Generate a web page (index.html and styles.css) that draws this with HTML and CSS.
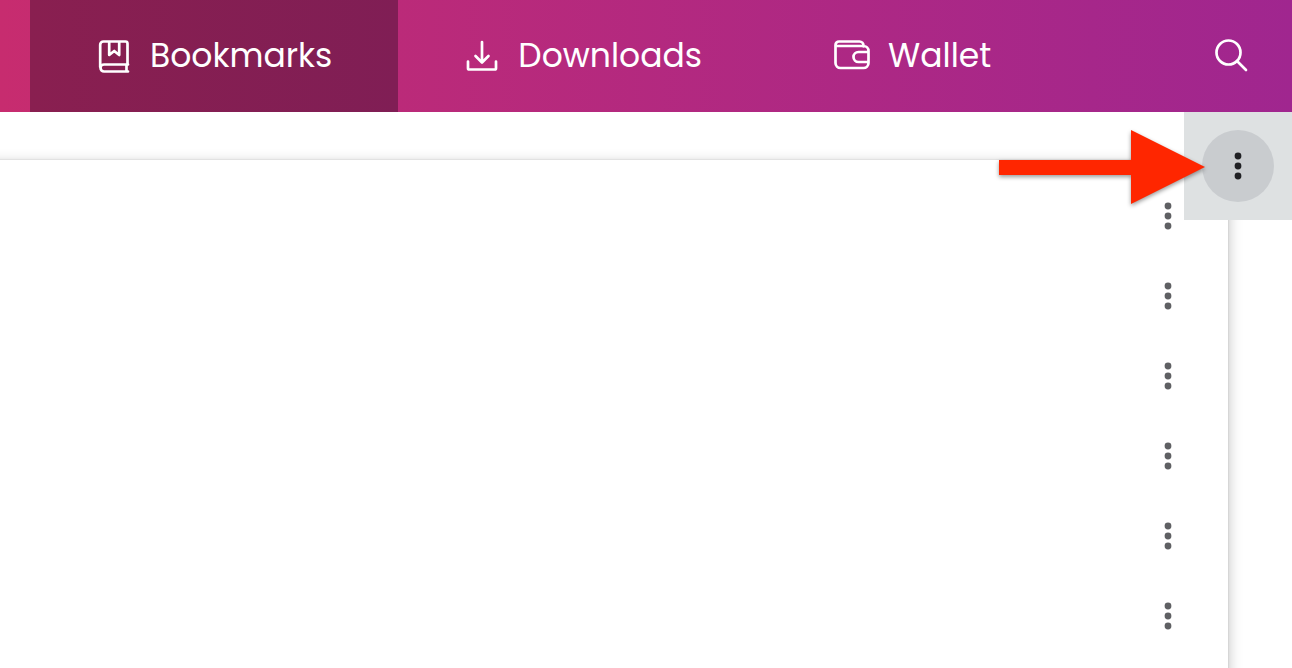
FILE: index.html
```html
<!DOCTYPE html>
<html lang="en">
<head>
    <meta charset="UTF-8">
    <meta name="viewport" content="width=device-width, initial-scale=1.0">
    <title>Bookmarks</title>
    <link rel="stylesheet" href="styles.css">
</head>
<body>
    <header class="navbar">
        <nav class="tabs">
            <a href="#bookmarks" class="tab active" aria-current="page">
                <svg class="icon" viewBox="0 1 36 36" aria-hidden="true">
                    <path d="M31.500 27.500V6.500a2 2 0 0 0-2-2H7.500A3.300 3.300 0 0 0 4.200 7.800V30M32 27.500H8a3.500 3.500 0 0 0 0 7H32M30.500 27.500v7M13.200 4.500v13.500l5-4 5 4V4.500"/>
                </svg>
                <span>Bookmarks</span>
            </a>
            <a href="#downloads" class="tab">
                <svg class="icon" viewBox="0 1 36 36" aria-hidden="true">
                    <path d="M18 5v20M11.500 19l6.500 6.500 6.500-6.500M4 24.500v6.700a1.300 1.300 0 0 0 1.300 1.300h25.400a1.300 1.300 0 0 0 1.300-1.300V24.500"/>
                </svg>
                <span>Downloads</span>
            </a>
            <a href="#wallet" class="tab">
                <svg class="icon" viewBox="0 0 36 36" aria-hidden="true">
                    <path d="M1.500 7v18a5 5 0 0 0 5 5h23a5 5 0 0 0 5-5V13a5 5 0 0 0-5-5H3M1.500 9V7a3.500 3.500 0 0 1 3.500-3.500h20.500a4 4 0 0 1 4 4v1M34.500 14h-10a5 5 0 0 0 0 10h10"/>
                </svg>
                <span>Wallet</span>
            </a>
        </nav>
        <button type="button" class="search" aria-label="Search">
            <svg class="icon" viewBox="1 1 36 36" aria-hidden="true">
                <circle cx="15.500" cy="15.500" r="12"/>
                <path d="M24 24l9 9"/>
            </svg>
        </button>
    </header>

    <main class="content">
        <div class="toolbar">
            <button type="button" class="menu-button" aria-label="Organize">
                <svg class="dots" viewBox="0 0 8 28" aria-hidden="true">
                    <circle cx="4" cy="4" r="3.400"/>
                    <circle cx="4" cy="14" r="3.400"/>
                    <circle cx="4" cy="24" r="3.400"/>
                </svg>
            </button>
        </div>

        <!-- Points at the organize menu -->
        <svg class="arrow" viewBox="0 0 208 76" aria-hidden="true">
            <path d="M1 30h132V0l74 37-74 37V45H1z"/>
        </svg>

        <ul class="card">
            <li class="row">
                <button type="button" class="row-menu" aria-label="More actions">
                    <svg class="dots" viewBox="0 0 8 28" aria-hidden="true"><circle cx="4" cy="4" r="3.400"/><circle cx="4" cy="14" r="3.400"/><circle cx="4" cy="24" r="3.400"/></svg>
                </button>
            </li>
            <li class="row">
                <button type="button" class="row-menu" aria-label="More actions">
                    <svg class="dots" viewBox="0 0 8 28" aria-hidden="true"><circle cx="4" cy="4" r="3.400"/><circle cx="4" cy="14" r="3.400"/><circle cx="4" cy="24" r="3.400"/></svg>
                </button>
            </li>
            <li class="row">
                <button type="button" class="row-menu" aria-label="More actions">
                    <svg class="dots" viewBox="0 0 8 28" aria-hidden="true"><circle cx="4" cy="4" r="3.400"/><circle cx="4" cy="14" r="3.400"/><circle cx="4" cy="24" r="3.400"/></svg>
                </button>
            </li>
            <li class="row">
                <button type="button" class="row-menu" aria-label="More actions">
                    <svg class="dots" viewBox="0 0 8 28" aria-hidden="true"><circle cx="4" cy="4" r="3.400"/><circle cx="4" cy="14" r="3.400"/><circle cx="4" cy="24" r="3.400"/></svg>
                </button>
            </li>
            <li class="row">
                <button type="button" class="row-menu" aria-label="More actions">
                    <svg class="dots" viewBox="0 0 8 28" aria-hidden="true"><circle cx="4" cy="4" r="3.400"/><circle cx="4" cy="14" r="3.400"/><circle cx="4" cy="24" r="3.400"/></svg>
                </button>
            </li>
            <li class="row">
                <button type="button" class="row-menu" aria-label="More actions">
                    <svg class="dots" viewBox="0 0 8 28" aria-hidden="true"><circle cx="4" cy="4" r="3.400"/><circle cx="4" cy="14" r="3.400"/><circle cx="4" cy="24" r="3.400"/></svg>
                </button>
            </li>
        </ul>
    </main>
</body>
</html>
```
FILE: styles.css
```css
* {
    box-sizing: border-box;
}
body {
    margin: 0;
    min-height: 100vh;
    display: flex;
    flex-direction: column;
    font-family: Poppins, Inter, sans-serif;
    background-color: #fff;
}
button {
    padding: 0;
    border: none;
    background: none;
    cursor: pointer;
}
.navbar {
    display: flex;
    justify-content: space-between;
    height: 112px;
    padding-left: 30px;
    background: linear-gradient(to right, #c72c6f, #a0268f);
}
.tabs {
    display: flex;
}
.tab {
    display: flex;
    align-items: center;
    gap: 18px;
    padding: 0 66px;
    color: #fff;
    font-size: 33px;
    line-height: 48px;
    text-decoration: none;
}
.tab.active {
    background: linear-gradient(to right, #891f50, #801e55);
}
.icon {
    width: 36px;
    height: 36px;
    flex-shrink: 0;
    fill: none;
    stroke: #fff;
    stroke-width: 2.7;
    stroke-linecap: round;
    stroke-linejoin: round;
}
.search {
    display: flex;
    align-items: center;
    padding: 0 42px;
}
.content {
    position: relative;
    flex: 1;
    display: flex;
    flex-direction: column;
    overflow: hidden;
}
.toolbar {
    position: absolute;
    top: 0;
    right: 0;
    z-index: 1;
    padding: 18px;
    background-color: #dee1e2;
}
.menu-button {
    display: flex;
    align-items: center;
    justify-content: center;
    width: 72px;
    height: 72px;
    border-radius: 50%;
    background-color: #c9cccf;
    color: #202124;
}
.dots {
    width: 8px;
    height: 28px;
    fill: currentColor;
}
.arrow {
    position: absolute;
    top: 18px;
    right: 86px;
    z-index: 2;
    width: 208px;
    height: 76px;
    overflow: visible;
    fill: #ff2600;
    filter: drop-shadow(0 2px 2px rgba(0, 0, 0, 0.4));
}
.card {
    flex: 1;
    margin: 48px 64px -24px -16px;
    padding: 16px 40px 16px 0;
    list-style: none;
    background-color: #fff;
    box-shadow: 0 0 2px rgba(0, 0, 0, 0.15), 2px 2px 12px rgba(0, 0, 0, 0.2);
}
.row {
    display: flex;
    align-items: center;
    justify-content: flex-end;
    height: 80px;
}
.row-menu {
    display: flex;
    align-items: center;
    justify-content: center;
    width: 40px;
    height: 72px;
    color: #5f6063;
}
```
